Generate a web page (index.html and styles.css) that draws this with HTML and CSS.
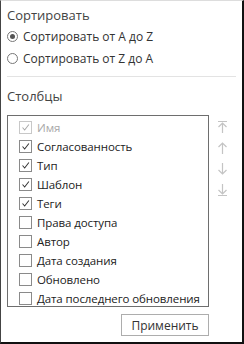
FILE: index.html
```html
<!DOCTYPE html>
<html>
<head>
<meta charset="utf-8">
<link rel="stylesheet" href="styles.css">
</head>
<body>
<div class="panel">
  <div class="title">Сортировать</div>
  <label class="radio-row"><span class="radio checked"></span><span>Сортировать от A до Z</span></label>
  <label class="radio-row"><span class="radio"></span><span>Сортировать от Z до A</span></label>
  <div class="sep"></div>
  <div class="title cols-title">Столбцы</div>
  <div class="cols">
    <div class="list">
      <div class="item disabled"><span class="cb on"><svg viewBox="0 0 13 13"><path d="M3 6.5 L5.5 9.5 L10.5 3" fill="none" stroke="#a8a8a8" stroke-width="1.2"/></svg></span><span>Имя</span></div>
      <div class="item"><span class="cb on"><svg viewBox="0 0 13 13"><path d="M3 6.5 L5.5 9.5 L10.5 3" fill="none" stroke="#333" stroke-width="1.2"/></svg></span><span>Согласованность</span></div>
      <div class="item"><span class="cb on"><svg viewBox="0 0 13 13"><path d="M3 6.5 L5.5 9.5 L10.5 3" fill="none" stroke="#333" stroke-width="1.2"/></svg></span><span>Тип</span></div>
      <div class="item"><span class="cb on"><svg viewBox="0 0 13 13"><path d="M3 6.5 L5.5 9.5 L10.5 3" fill="none" stroke="#333" stroke-width="1.2"/></svg></span><span>Шаблон</span></div>
      <div class="item"><span class="cb on"><svg viewBox="0 0 13 13"><path d="M3 6.5 L5.5 9.5 L10.5 3" fill="none" stroke="#333" stroke-width="1.2"/></svg></span><span>Теги</span></div>
      <div class="item"><span class="cb"></span><span>Права доступа</span></div>
      <div class="item"><span class="cb"></span><span>Автор</span></div>
      <div class="item"><span class="cb"></span><span>Дата создания</span></div>
      <div class="item"><span class="cb"></span><span>Обновлено</span></div>
      <div class="item"><span class="cb"></span><span>Дата последнего обновления</span></div>
    </div>
    <div class="arrows">
      <svg viewBox="0 0 11 14"><path d="M1 1.5 H10 M5.5 3 V13 M1.5 7 L5.5 3 L9.5 7" fill="none" stroke="#c4c4c4" stroke-width="1.2"/></svg>
      <svg viewBox="0 0 11 14"><path d="M5.5 2 V13 M1.5 6 L5.5 2 L9.5 6" fill="none" stroke="#c4c4c4" stroke-width="1.2"/></svg>
      <svg viewBox="0 0 11 14"><path d="M5.5 1 V12 M1.5 8 L5.5 12 L9.5 8" fill="none" stroke="#c4c4c4" stroke-width="1.2"/></svg>
      <svg viewBox="0 0 11 14"><path d="M5.5 1 V11 M1.5 7 L5.5 11 L9.5 7 M1 12.5 H10" fill="none" stroke="#c4c4c4" stroke-width="1.2"/></svg>
    </div>
  </div>
  <div class="actions"><button class="btn">Применить</button></div>
</div>
</body>
</html>
```
FILE: styles.css
```css
html, body { margin: 0; padding: 0; }
body {
  width: 244px;
  height: 344px;
  font-family: "Open Sans", "Noto Sans", sans-serif;
  color: #333;
  background: #fff;
}
.panel {
  box-sizing: border-box;
  width: 244px;
  height: 344px;
  border-left: 1px solid #444;
  border-top: 1px solid #ddd;
  border-right: 2px solid #111;
  border-bottom: 2px solid #111;
  padding: 5px 6px 0 6px;
}
.title {
  font-size: 13px;
  color: #444;
  line-height: 18px;
  height: 18px;
}
.radio-row {
  display: flex;
  align-items: center;
  height: 22px;
  font-size: 12px;
  color: #333;
  gap: 5px;
  white-space: nowrap;
}
.radio-row:first-of-type { margin-top: 1px; }
.radio {
  box-sizing: border-box;
  width: 11px;
  height: 11px;
  border: 1px solid #777;
  border-radius: 50%;
  position: relative;
  flex: none;
}
.radio.checked::after {
  content: "";
  position: absolute;
  left: 2px; top: 2px;
  width: 5px; height: 5px;
  border-radius: 50%;
  background: #555;
}
.sep {
  height: 1px;
  background: #e3e3e3;
  margin: 7px 0 0 0;
}
.cols-title { margin-top: 10px; }
.cols {
  display: flex;
  margin-top: 10px;
}
.list {
  box-sizing: border-box;
  width: 204px;
  height: 192px;
  border: 1px solid #6e6e6e;
  padding: 2px 0 0 11px;
}
.item {
  display: flex;
  align-items: center;
  height: 19px;
  font-size: 11.5px;
  gap: 5px;
  color: #222;
  white-space: nowrap;
  letter-spacing: -0.1px;
}
.item.disabled { color: #a8a8a8; }
.cb {
  box-sizing: border-box;
  width: 13px;
  height: 13px;
  border: 1px solid #8a8a8a;
  flex: none;
  display: flex;
}
.item.disabled .cb { border-color: #c8c8c8; }
.cb svg { width: 11px; height: 11px; }
.arrows {
  display: flex;
  flex-direction: column;
  align-items: center;
  width: 27px;
  padding-top: 5px;
  gap: 7px;
}
.arrows svg { width: 11px; height: 14px; }
.actions {
  display: flex;
  justify-content: flex-end;
  padding-right: 27px;
  margin-top: 7px;
}
.btn {
  font-family: "Open Sans", "Noto Sans", sans-serif;
  font-size: 12px;
  color: #333;
  background: #fff;
  border: 1px solid #adadad;
  width: 88px;
  height: 22px;
  padding: 0;
}
```
